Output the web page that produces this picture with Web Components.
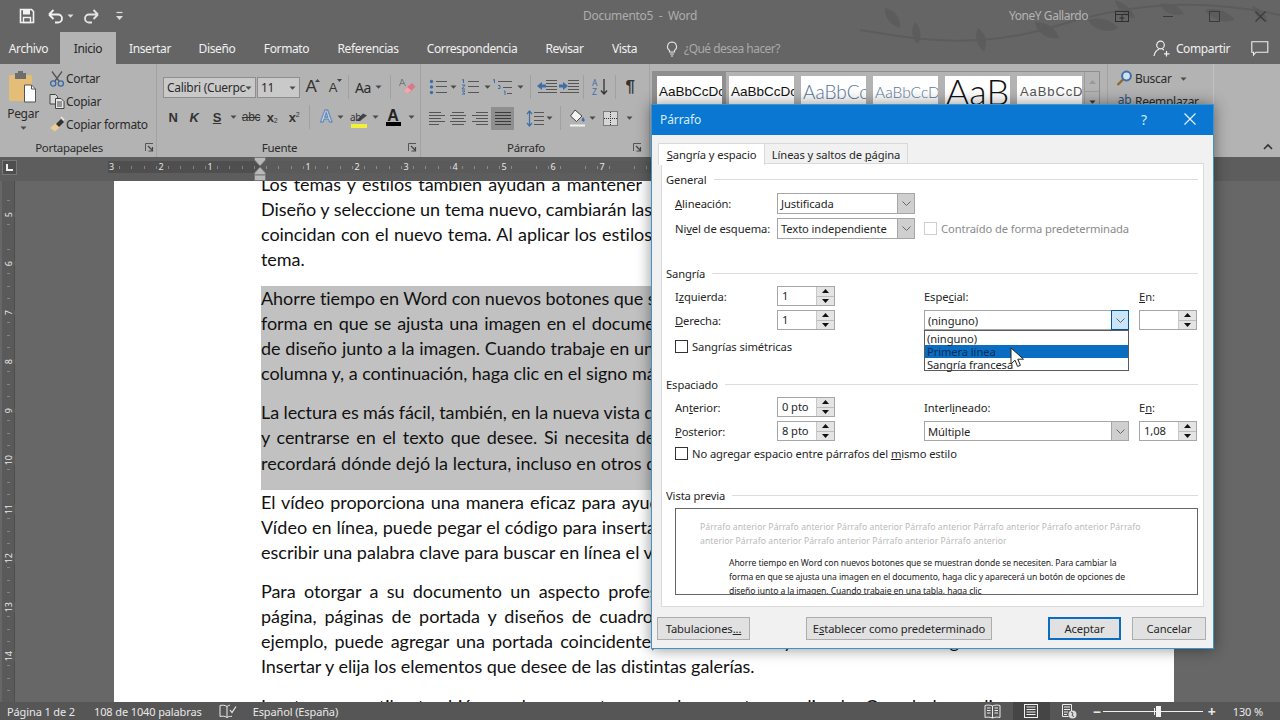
<!DOCTYPE html>
<html lang="es"><head><meta charset="utf-8"><title>Documento5 - Word</title>
<style>html,body{margin:0;padding:0;background:#666}body{font-family:"Noto Sans","Open Sans",sans-serif}</style></head>
<body><word-app></word-app>
<script>
const E=(name,css,html)=>customElements.define(name,class extends HTMLElement{connectedCallback(){if(this.shadowRoot)return;const s=this.attachShadow({mode:'open'});const a=k=>this.getAttribute(k)||'';s.innerHTML='<style>'+css+'</style>'+(typeof html=='function'?html(a):html)}});
const S=(w,h,b,x='')=>`<svg width="${w}" height="${h}" viewBox="0 0 ${w} ${h}" ${x} style="display:block;overflow:visible">${b}</svg>`;
const caret=c=>S(7,4,`<path d="M0.5 0.5h6L3.5 3.8z" fill="${c||'#4a4a4a'}"/>`);
const ln=(x1,y,x2,c='#555')=>`<path d="M${x1} ${y+.5}H${x2}" stroke="${c}"/>`;
const I={
save:S(16,16,'<path d="M1.5 1.5h11l2 2v11h-13z" fill="none" stroke="#f2f2f2" stroke-width="1.6"/><rect x="4" y="2" width="7" height="4.5" fill="#f2f2f2"/><rect x="4.5" y="9.5" width="7" height="5" fill="none" stroke="#f2f2f2" stroke-width="1.4"/>'),
undo:S(18,16,'<path d="M2 6.5H11a4 4 0 0 1 0 8H8M2 6.5L6.5 2M2 6.5L6.5 11" fill="none" stroke="#f2f2f2" stroke-width="1.8"/>'),
redo:S(18,16,'<path d="M16 6.5H7a4 4 0 0 0 0 8h3M16 6.5L11.5 2M16 6.5L11.5 11" fill="none" stroke="#e4e4e4" stroke-width="1.8"/>'),
more:S(9,10,'<path d="M1.5 1.5h6" stroke="#ddd" stroke-width="1.2"/><path d="M1 5h7L4.5 9z" fill="#ddd"/>'),
box:S(14,11,'<rect x=".5" y=".5" width="13" height="10" fill="none" stroke="#2e2e2e"/><path d="M.5 3.5h13M7 4v6M4.5 7h5" stroke="#2e2e2e"/>'),
min:S(10,10,'<path d="M0 5.5h10" stroke="#3a3a3a"/>'),
max:S(11,11,'<rect x=".5" y=".5" width="10" height="10" fill="none" stroke="#3a3a3a"/>'),
close:S(11,11,'<path d="M.5.5l10 10M10.5.5l-10 10" stroke="#3a3a3a" stroke-width="1.1"/>'),
bulb:S(12,16,'<path d="M6 1a4.6 4.6 0 0 0-2.5 8.4V11h5V9.4A4.6 4.6 0 0 0 6 1zM4 13h4M5 15h2" fill="none" stroke="#e6e6e6" stroke-width="1.1"/>'),
person:S(17,17,'<circle cx="7.5" cy="5" r="3.8" fill="none" stroke="#f0f0f0" stroke-width="1.2"/><path d="M1 16c.6-3.5 2.6-6 5.2-7M9 8.8c.8.3 1.3.7 1.8 1.2M13.5 11v5.5M11 13.8h5.5" fill="none" stroke="#f0f0f0" stroke-width="1.2"/>'),
comment:S(18,15,'<path d="M.8.8h16v10.4H5L2.5 14v-2.8H.8z" fill="none" stroke="#f0f0f0" stroke-width="1.1"/>'),
paste:S(30,32,'<rect x="1" y="4" width="23" height="26" rx="1.5" fill="#e4bd76"/><rect x="7" y="2" width="11" height="6" fill="#6d6d6d"/><rect x="10" y="0" width="5" height="3" fill="#6d6d6d"/><path d="M16.5 14h7l4 4v13h-11z" fill="#fff" stroke="#555"/><path d="M23.5 14v4h4" fill="none" stroke="#555"/>'),
cut:S(16,16,'<path d="M3 .5l7 9.5M13 .5L6 10" stroke="#555" stroke-width="1.3"/><circle cx="4.2" cy="12.5" r="2.6" fill="none" stroke="#3c69a0" stroke-width="1.3"/><circle cx="11.8" cy="12.5" r="2.6" fill="none" stroke="#3c69a0" stroke-width="1.3"/>'),
copy:S(16,15,'<path d="M1 .5h5.5l2 2V10H1z" fill="#d8d8d8" stroke="#444"/><path d="M6.5 4.5H12l3 3v7H6.5z" fill="#e8e8e8" stroke="#444"/><path d="M8 8h5M8 10h5M8 12h5" stroke="#444"/>'),
brush:S(16,15,'<path d="M1 11l6-5 4 4-5 4.5z" fill="#e8cd96"/><path d="M7 7l5-5 3 3-5 5z" fill="#333"/><path d="M12 0l3 3" stroke="#eee" stroke-width="1.4"/>'),
launch:S(9,9,'<path d="M.5 8V.5H8" fill="none" stroke="#555"/><path d="M3 3l4 4M7.5 4v4h-4" fill="none" stroke="#444" stroke-width="1.2"/>'),
eraser:S(17,18,'<path d="M3 1l3.5 7M3 1L.5 8M1.5 5.5h3.5" fill="none" stroke="#777"/><path d="M8 9l5-4 3.5 3.5-6 6.5H7L4.5 13z" fill="#d8788c"/><path d="M4.5 13L8 9l4.5 3.5L9.5 15H7z" fill="#eaa"/>'),
bullets:S(19,16,'<circle cx="2.5" cy="2.5" r="1.7" fill="#3d6ea8"/><circle cx="2.5" cy="8" r="1.7" fill="#3d6ea8"/><circle cx="2.5" cy="13.5" r="1.7" fill="#3d6ea8"/>'+ln(7,2,18)+ln(7,7,18)+ln(7,13,18)),
numbers:S(19,16,'<path d="M1 1l1.5-.5V4M1 6h3l-3 4h3M1 12h3l-1.5 1.5L4 15H1" fill="none" stroke="#3d6ea8"/>'+ln(7,2,18)+ln(7,7,18)+ln(7,13,18)),
multi:S(22,17,'<path d="M1 1l1.5-.5V4" fill="none" stroke="#3d6ea8"/><path d="M6 6.5h2v3H6M12 12h1v4" fill="none" stroke="#3d6ea8"/>'+ln(6,2,20)+ln(11,8,20)+ln(15,14,20)),
outdent:S(20,14,ln(9,0,20)+ln(9,3,20)+ln(9,6,20)+ln(9,9,20)+ln(1,12,20)+'<path d="M0 6l5-4v2.5h4v3H5V10z" fill="#3d6ea8"/>'),
indent:S(20,14,ln(9,0,20)+ln(9,3,20)+ln(9,6,20)+ln(9,9,20)+ln(1,12,20)+'<path d="M9 6L4 2v2.5H0v3h4V10z" fill="#3d6ea8"/>'),
sort:S(16,20,'<text x="0" y="9" font-family="Noto Sans" font-size="8.5" fill="#3d6ea8">A</text><text x="0" y="18" font-family="Noto Sans" font-size="8.5" fill="#3d6ea8">Z</text><path d="M12 2v15M9 13.5l3 3.5 3-3.5" fill="none" stroke="#333" stroke-width="1.3"/>'),
al:S(16,13,[0,3,6,9,12].map((y,i)=>ln(0,y,i%2?16:i==4?10:12)).join('')),
ac:S(16,13,[0,3,6,9,12].map((y,i)=>ln(i%2?0:2,y,i%2?16:14)).join('')),
ar:S(16,13,[0,3,6,9,12].map((y,i)=>ln(i%2?0:4,y,16)).join('')),
aj:S(16,13,[0,3,6,9,12].map(y=>ln(0,y,16,'#3c3c3c')).join('')),
spacing:S(18,17,'<path d="M3.5 1v15M1 4l2.5-3L6 4M1 13l2.5 3L6 13" fill="none" stroke="#3d6ea8" stroke-width="1.2"/>'+ln(8,2,18)+ln(8,6,18)+ln(8,10,18)+ln(8,14,18)),
shade:S(18,18,'<path d="M6 1l7 6-5.5 5.5L1.5 7z" fill="#f4f4f4" stroke="#444"/><path d="M14 8c1.5 2 2 3 1.5 4s-2.5.8-2.8-.2.4-2 1.3-3.8z" fill="#3d6ea8"/><path d="M1 16.5h15" stroke="#f0f0f0" stroke-width="2"/>'),
borders:S(15,15,'<rect x=".5" y=".5" width="14" height="14" fill="#d6d6d6" stroke="#333" stroke-dasharray="1 1"/><path d="M7.5 1v13M1 7.5h13" stroke="#333" stroke-dasharray="1 1"/>'),
search:S(17,17,'<circle cx="10.5" cy="6" r="4.4" fill="#cfe0f0" stroke="#3d6ea8" stroke-width="2"/><path d="M7 9.5L1.5 15" stroke="#8a6a30" stroke-width="2.4"/>'),
penhl:S(19,8,'<path d="M13 .5l4 2L10 8H6z" fill="#444"/>'),
up:S(10,6,'<path d="M1 5l4-4 4 4" fill="none" stroke="#333" stroke-width="1.6"/>'),
chev:S(9,5,'<path d="M.5.5l4 4 4-4" fill="none" stroke="#666"/>'),
tabstop:S(7,7,'<path d="M1 0v6h6" fill="none" stroke="#eee" stroke-width="2"/>'),
marker:S(12,24,'<path d="M.5.5h11v2.5L6 9 .5 3zM6 10l5.5 6v2H.5v-2z" fill="#b9b9b9" stroke="#777"/><rect x=".5" y="18" width="11" height="5.5" fill="#b9b9b9" stroke="#777"/>'),
book:S(18,15,'<path d="M8 2.5C6 1 3.5 1 1 1.5v11c2.5-.5 5-.5 7 1zM8 2.5c1-.8 2-1.2 3-1.4M8 13.5c1.5-1 3-1.2 5-1.2" fill="none" stroke="#ececec"/><path d="M11 6l2 2.5 4-6" fill="none" stroke="#ececec" stroke-width="1.2"/>'),
read:S(17,15,'<path d="M8.5 2C6.5 1 3 .8 1 1.5v12c2-.6 5.5-.5 7.5.5 2-1 5.5-1.1 7.5-.5v-12c-2-.7-5.500-.5-7.5.5zM8.5 2v12M3 4h3.5M3 6.5h3.5M3 9h3.5M10.5 4H14M10.5 6.5H14M10.5 9H14" fill="none" stroke="#ececec"/>'),
print:S(14,14,'<rect x=".5" y=".5" width="13" height="13" fill="none" stroke="#f0f0f0"/><path d="M2.5 3h9M2.5 5.5h9M2.5 8h9M2.5 10.5h9" stroke="#f0f0f0"/>'),
web:S(15,15,'<path d="M.5.5h9v7M.5.5v12h6M2 3h6M2 5.5h6M2 8h4M2 10.5h3" fill="none" stroke="#ececec"/><circle cx="10.5" cy="10.5" r="4" fill="#dcdcdc"/><path d="M9 8l2 1-1 2.5 2 1" fill="none" stroke="#555"/>'),
cursor:S(16,22,'<path d="M1 1v16l4-3.8 2.6 6.3 2.8-1.2-2.6-6.1H13.5z" fill="#fff" stroke="#222"/>')
};

E('word-app',`:host{display:flex;flex-direction:column;width:1280px;height:720px;position:relative;overflow:hidden;background:#676767;color:#222;font-family:"Noto Sans","Open Sans",sans-serif}`,
`<window-top></window-top><word-ribbon></word-ribbon><h-ruler></h-ruler><doc-view></doc-view><status-bar></status-bar><para-dialog></para-dialog>`);

E('window-top',`:host{display:block;position:relative;background:#656565;height:64px;flex:none}
svg.deco{position:absolute;left:860px;top:0}`,
`<svg class="deco" width="420" height="64" viewBox="0 0 420 64" fill="#5c5c5c"><path d="M25 8c10 2 16 10 15 20-8-2-16-10-15-20zM55 22c6 6 7 14 3 22-6-5-8-14-3-22zM118 28c8 5 10 14 6 23-7-5-10-14-6-23zM175 22c12 0 22 7 24 16-12 2-22-5-24-16zM228 20c12-4 24 0 30 8-10 6-24 2-30-8zM255 0c10 3 18 10 20 18-10 0-18-8-20-18zM300 4c10-2 20 2 24 10-10 3-20-1-24-10zM345 10c12-3 24 2 30 10-12 4-24-1-30-10zM392 6c8 2 14 8 16 16-8-1-14-7-16-16z"/><path d="M0 30c60 10 120 20 200-5s150-25 220-10" fill="none" stroke="#5c5c5c" stroke-width="2"/></svg><title-bar></title-bar><tab-bar></tab-bar>`);

E('title-bar',`:host{display:grid;grid-template-columns:1fr auto 1fr;height:32px;align-items:center;position:relative;font-size:12px;letter-spacing:-.3px}
.l,.r{display:flex;align-items:center}.r{justify-content:flex-end}
.c{display:flex;align-items:center;justify-content:center;flex:none;height:32px}
.t{color:#adadad;margin-top:-2px}.n{color:#b4b4b4;margin:-2px 11px 0 0;letter-spacing:-.45px}`,
`<div class="l"><span class="c" style="width:16px;margin-left:19px">${I.save}</span><span class="c" style="width:20px;margin-left:11px">${I.undo}</span><span class="c" style="width:8px">${caret('#ddd')}</span><span class="c" style="width:20px;margin-left:7px">${I.redo}</span><span class="c" style="width:12px;margin-left:12px">${I.more}</span></div>
<div class="t">Documento5&nbsp; -&nbsp; Word</div>
<div class="r"><span class="n">YoneY Gallardo</span><span class="c" style="width:46px">${I.box}</span><span class="c" style="width:46px">${I.min}</span><span class="c" style="width:46px">${I.max}</span><span class="c" style="width:43px;padding-left:3px;box-sizing:border-box">${I.close}</span></div>`);

E('tab-bar',`:host{display:flex;height:32px;position:relative;font-size:12px;color:#f1f1f1;align-items:stretch;letter-spacing:-.38px}
span{display:flex;align-items:center;justify-content:center;flex:none;padding-top:1px;box-sizing:border-box}
.on{background:#b3b3b3;color:#262626}.q{color:#a9a9a9;justify-content:flex-start;margin-left:6px;letter-spacing:-.55px}.sp{flex:1}`,
`<span style="width:57px">Archivo</span><span style="width:3px"></span><span class="on" style="width:56px">Inicio</span><span style="width:68px">Insertar</span><span style="width:66px">Diseño</span><span style="width:73px">Formato</span><span style="width:90px">Referencias</span><span style="width:118px">Correspondencia</span><span style="width:67px">Revisar</span><span style="width:53px">Vista</span><span style="width:15px"></span><span style="width:12px">${I.bulb}</span><span class="q" style="width:120px">¿Qué desea hacer?</span><span class="sp"></span><span style="width:17px">${I.person}</span><span style="width:67px;justify-content:flex-end;padding-right:7px">Compartir</span><span style="width:14px"></span><span style="width:18px">${I.comment}</span><span style="width:11px"></span>`);

E('ribbon-group',`:host{display:flex;flex-direction:column;height:100%;box-sizing:border-box;border-right:1px solid #a2a2a2;position:relative;flex:none}
.b{flex:1;min-height:0;position:relative}.f{height:20px;flex:none;display:flex;align-items:center;justify-content:center;font-size:11.5px;color:#2c2c2c;position:relative;padding-right:18px;box-sizing:border-box}
.f i{position:absolute;right:var(--lr,2px);top:6px}`,
a=>`<div class="b"><slot></slot></div><div class="f">${a('label')}${a('label')?`<i>${I.launch}</i>`:''}</div>`);

E('word-ribbon',`:host{display:flex;height:93px;flex:none;background:#b3b3b3;font-size:12px;color:#2b2b2b;letter-spacing:-.3px}
.row{display:flex;align-items:center;height:22px}
.c{display:flex;align-items:center;justify-content:center;flex:none;height:22px;position:relative}
.s{width:1px;height:24px;background:#a0a0a0;flex:none}
.paste{position:absolute;left:0;top:7px;width:46px;display:flex;flex-direction:column;align-items:center;color:#2b2b2b}
.paste b{font-weight:400;margin-top:3px;line-height:16px}.paste i{margin-top:4px}
.clip{position:absolute;left:47px;top:3px}.clip .row{height:23px;white-space:nowrap}
.clip .c{width:19px;margin-right:0}
.combo{height:21px;box-sizing:border-box;border:1px solid #8e8e8e;background:#c9c9c9;display:flex;align-items:center;padding-left:3px;font-size:12px;position:relative;overflow:hidden;white-space:nowrap;flex:none}
.combo i{position:absolute;right:3px;top:8px;background:#c9c9c9;padding-left:2px}
.fs{padding:12px 0 0 6px;box-sizing:border-box}
.fs .row+.row{margin-top:8px}
.fs2 .row+.row{margin-top:9px}
.tb{font-family:"Liberation Sans",sans-serif;font-weight:700;color:#333;font-size:13px}
.big{font-family:"Liberation Sans";font-size:17px;color:#333}.sm{font-family:"Liberation Sans";font-size:13px;color:#333}
.up{position:absolute;top:3px;right:2px;font-size:0}
.sup,.sub{font-size:7px;font-weight:400}
.glow{font-family:"Liberation Sans";font-weight:700;font-size:17px;color:#dbe7f4;-webkit-text-stroke:1px #5480b4}
.hl{display:flex;flex-direction:column;align-items:center;position:relative;width:18px}
.hl em{font:10px "Noto Sans";color:#333;position:absolute;left:0;top:-3px}
.ybar{position:absolute;left:1px;top:11px;width:16px;height:4px;background:#f2f03a}
.fc{font:700 16px "Liberation Sans";color:#222;border-bottom:4px solid #000;line-height:13px;width:15px;text-align:center;display:block}
.act{background:#8f8f8f}
.tile{width:65px;height:45px;background:#fff;overflow:hidden;white-space:nowrap;flex:none;box-sizing:border-box;display:flex;align-items:flex-start;justify-content:center;letter-spacing:0;font-family:"Liberation Sans",sans-serif}
.gal{position:absolute;left:2px;top:7px;width:448px;height:73px;border:1px solid #8e8e8e;box-sizing:border-box;display:flex;padding:4px 0 0 4px}
.gal .tile+.tile{margin-left:7px}
.gs{position:absolute;right:0;top:0;width:14px;display:flex;flex-direction:column;border-left:1px solid #9c9c9c}
.gs span{height:19px;display:flex;align-items:center;justify-content:center;border-bottom:1px solid #9c9c9c}
.first{outline:4px solid #8f8f8f}
.ed{padding:3px 0 0 6px}.ed .row{height:23px;white-space:nowrap}
.rest{flex:1;display:flex;align-items:flex-end;justify-content:flex-end;padding:0 7px 7px 0}`,
`<ribbon-group label="Portapapeles" style="width:157px">
<div class="paste">${I.paste}<b>Pegar</b><i>${caret()}</i></div>
<div class="clip"><div class="row"><span class="c">${I.cut}</span>Cortar</div><div class="row"><span class="c">${I.copy}</span>Copiar</div><div class="row"><span class="c">${I.brush}</span>Copiar formato</div></div>
</ribbon-group>
<ribbon-group label="Fuente" style="width:264px;--lr:3px"><div class="fs">
<div class="row"><div class="combo" style="width:93px">Calibri (Cuerpo<i>${caret()}</i></div><div class="combo" style="width:43px;margin-left:1px">11<i>${caret()}</i></div>
<span class="c" style="width:22px;margin-left:0"><span class="big">A</span><span class="up">${S(5,3,'<path d="M0 3l2.5-3L5 3z" fill="#444"/>')}</span></span>
<span class="c" style="width:22px"><span class="sm">A</span><span class="up">${S(5,3,'<path d="M0 0l2.5 3L5 0z" fill="#444"/>')}</span></span>
<span class="c" style="width:8px"><span class="s"></span></span><span class="c" style="width:22px;font-size:14px">Aa</span><span class="c" style="width:8px">${caret()}</span><span class="c" style="width:16px"><span class="s"></span></span><span class="c" style="width:18px">${I.eraser}</span></div>
<div class="row"><span class="c tb" style="width:20px">N</span><span class="c tb" style="width:22px;font-style:italic">K</span><span class="c tb" style="width:24px;text-decoration:underline">S</span><span class="c" style="width:8px">${caret()}</span><span class="c tb" style="width:28px;font-size:12px;text-decoration:line-through;font-weight:400">abc</span><span class="c tb" style="width:14px">x<span class="sub" style="margin-top:6px">2</span></span><span class="c tb" style="width:30px">x<span class="sup" style="margin-top:-6px">2</span></span><span class="s" style="width:1px;margin-right:5px"></span><span class="c glow" style="width:22px">A</span><span class="c" style="width:7px">${caret()}</span><span class="c" style="width:26px;margin-left:2px"><span class="hl"><em>ab</em>${I.penhl}<span class="ybar"></span></span></span><span class="c" style="width:6px">${caret()}</span><span class="c" style="width:30px"><span class="fc">A</span></span><span class="c" style="width:6px">${caret()}</span></div>
</div></ribbon-group>
<ribbon-group label="Párrafo" style="width:229px;--lr:7px"><div class="fs fs2">
<div class="row"><span class="c" style="width:22px">${I.bullets}</span><span class="c" style="width:8px">${caret()}</span><span class="c" style="width:26px">${I.numbers}</span><span class="c" style="width:8px">${caret()}</span><span class="c" style="width:24px">${I.multi}</span><span class="c" style="width:10px">${caret()}</span><span class="c" style="width:10px"><span class="s"></span></span><span class="c" style="width:24px">${I.outdent}</span><span class="c" style="width:20px">${I.indent}</span><span class="c" style="width:9px"><span class="s"></span></span><span class="c" style="width:24px">${I.sort}</span><span class="c" style="width:6px"><span class="s"></span></span><span class="c" style="width:24px;font:700 17px 'Liberation Sans';color:#333">¶</span></div>
<div class="row"><span class="c" style="width:20px">${I.al}</span><span class="c" style="width:22px">${I.ac}</span><span class="c" style="width:22px">${I.ar}</span><span class="c act" style="width:23px;height:23px">${I.aj}</span><span class="c" style="width:10px"></span><span class="c" style="width:22px">${I.spacing}</span><span class="c" style="width:6px">${caret()}</span><span class="c" style="width:16px"><span class="s"></span></span><span class="c" style="width:20px">${I.shade}</span><span class="c" style="width:8px">${caret()}</span><span class="c" style="width:2px"></span><span class="c" style="width:24px">${I.borders}</span><span class="c" style="width:14px">${caret()}</span></div>
</div></ribbon-group>
<ribbon-group style="width:458px"><div class="gal">
<div class="tile first" style="font-size:13.5px;color:#111;padding-top:8px;justify-content:flex-start;padding-left:2px">AaBbCcDc</div><div class="tile" style="font-size:13.5px;color:#111;padding-top:8px;justify-content:flex-start;padding-left:2px">AaBbCcDc</div><div class="tile" style="font-size:19px;color:#5a7596;padding-top:4px;justify-content:flex-start;padding-left:2px;font-family:Lato;font-weight:300">AaBbCc</div><div class="tile" style="font-size:15.5px;color:#5d7a9c;padding-top:7px;justify-content:flex-start;padding-left:2px;font-family:Lato;font-weight:300">AaBbCcD</div><div class="tile" style="font-size:36px;color:#111;font-family:Lato;font-weight:300;padding-top:0;line-height:30px">AaB</div><div class="tile" style="font-size:13px;color:#555;letter-spacing:.9px;padding-top:8px;justify-content:flex-start;padding-left:3px">AaBbCcD</div>
<div class="gs"><span>${S(7,4,'<path d="M0 4l3.5-4L7 4z" fill="#999"/>')}</span><span>${caret('#333')}</span></div>
</div></ribbon-group>
<ribbon-group style="width:106px;border-right-color:#c2c2c2"><div class="ed"><div class="row"><span class="c" style="width:21px">${I.search}</span>Buscar<span class="c" style="width:24px">${caret()}</span></div><div class="row"><span class="c" style="width:21px;font-size:12px;color:#2f4f7a;margin-top:-4px">ab</span>Reemplazar</div></div></ribbon-group>
<div class="rest">${I.up}</div>`);

const hnum=['2','1','','1','2','3','4','5','6','7'];
E('h-ruler',`:host{display:block;height:24px;flex:none;background:#5d5d5d;position:relative;border-top:0;box-sizing:border-box;padding-top:4px}
.in{display:flex;align-items:flex-start}
.tab{width:15px;height:15px;box-sizing:border-box;border:1px solid #777;background:#4e4e4e;margin:-1px 0 0 2px;display:flex;align-items:center;justify-content:center;flex:none}
.bar{margin-left:91px;height:12px;display:flex;width:920px;background:repeating-linear-gradient(90deg,transparent 0 11.25px,#848484 11.25px 12.25px) 0 50%/100% 3px no-repeat,#4f4f4f;color:#e6e6e6;font-size:9px;line-height:12px}
.bar span{width:49px;flex:none;text-align:center}.bar span:first-child{width:28.5px;text-align:left;padding-left:1px;box-sizing:border-box}
.live{position:absolute;left:260px;top:4px;height:12px;width:390px;background:#fff1}
.mk{position:absolute;left:254px;top:0}`,
`<div class="in"><div class="tab">${I.tabstop}</div><div class="bar"><span>3</span>${hnum.map(n=>`<span>${n}</span>`).join('')}</div></div><div class="live"></div><div class="mk">${I.marker}</div>`);

const vn=[5,6,7,8,9,10,11,12,13,14];
const D=[
[["Los temas y estilos también ayudan a mantener",381],["Diseño y seleccione un tema nuevo, cambiarán las",391],["coincidan con el nuevo tema. Al aplicar los estilos",391],["tema.",0]],
"S",
[["Ahorre tiempo en Word con nuevos botones que se",0],["forma en que se ajusta una imagen en el documento",420],["de diseño junto a la imagen. Cuando trabaje en una",402],["columna y, a continuación, haga clic en el signo más",0,-.04]],
[["La lectura es más fácil, también, en la nueva vista de",0,-.1],["y centrarse en el texto que desee. Si necesita dejar",414],["recordará dónde dejó la lectura, incluso en otros dispositivos",0,.05]],
"E",
[["El vídeo proporciona una manera eficaz para ayudar",414],["Vídeo en línea, puede pegar el código para insertar",0,.08],["escribir una palabra clave para buscar en línea el vídeo",0,.02]],
[["Para otorgar a su documento un aspecto profesional,",438],["página, páginas de portada y diseños de cuadro",392],["ejemplo, puede agregar una portada coincidente, el encabezado y la barra lateral. Haga clic en",766],["Insertar y elija los elementos que desee de las distintas galerías.",0]],
[["Los temas y estilos también ayudan a mantener su documento coordinado. Cuando haga clic en",766]]
];
function para(p){return '<div class="p">'+p.map(([t,w,ls])=>`<div class="l${w?' j':''}" style="${w?`width:${w}px;`:''}${ls?`letter-spacing:${ls}px`:''}">${t}</div>`).join('')+'</div>'}
function docHtml(){let h='';for(const p of D){if(p==='S'){h+='<div class="sel">';}else if(p==='E'){h+='</div>';}else h+=para(p)}return h}
E('doc-view',`:host{display:flex;flex:1;min-height:0;overflow:hidden;background:#676767;font-family:Lato,"Liberation Sans",sans-serif;color:#111}
.vr{width:12px;margin-left:2px;background:#5a5a5a;border-right:1px solid #4d4d4d;flex:none;padding-top:9.5px;box-sizing:content-box;color:#e6e6e6;font:9px "Noto Sans",sans-serif;
background-image:repeating-linear-gradient(0deg,transparent 0 11.25px,#848484 11.25px 12.25px);background-size:3px 100%;background-position:50% 0;background-repeat:no-repeat}
.vr div{height:49px;display:flex;align-items:center;justify-content:center}.vr span{writing-mode:vertical-rl;transform:rotate(180deg);background:#5a5a5a}
.page{margin-left:99px;width:1060px;background:#fff;flex:none;overflow:hidden;padding-left:147px;box-sizing:border-box}
.col{width:766px;margin-top:-9.5px}
.p{padding-bottom:14.15px}.l{height:25.08px;line-height:25.08px;font-size:18px;letter-spacing:-.05px;white-space:nowrap;overflow:visible}
.l.j{white-space:normal;text-align:justify;text-align-last:justify;overflow:hidden}
.sel{background:#c1c1c1;margin-top:0}`,
`<div class="vr">${vn.map(n=>`<div><span>${n}</span></div>`).join('')}</div><div class="page"><div class="col">${docHtml()}</div></div>`);

E('status-bar',`:host{display:flex;height:18px;flex:none;background:#565656;color:#e8e8e8;font-size:11px;align-items:center;position:relative;z-index:1;letter-spacing:-.12px}
span{flex:none;display:flex;align-items:center;justify-content:center;height:18px;white-space:nowrap}
.sp{flex:1}.on{background:#454545}
.z{width:100px;height:1px;background:#f0f0f0;position:relative;display:block;flex:none}
.z i{position:absolute;left:53px;top:-5px;width:5px;height:11px;background:#f4f4f4}.z b{position:absolute;left:51px;top:-3px;width:1px;height:7px;background:#f0f0f0}`,
`<span style="margin-left:7px">Página 1 de 2</span><span style="margin-left:19px">108 de 1040 palabras</span><span style="margin-left:17px;width:18px">${I.book}</span><span style="margin-left:16px">Español (España)</span><i class="sp"></i>
<span style="width:18px">${I.read}</span><span class="on" style="width:37px;margin-left:11px">${I.print}</span><span style="width:18px;margin-left:11px">${I.web}</span><span style="width:10px;margin-left:13px;font-weight:700;font-size:14px">−</span><span style="width:1px"></span><span class="z"><b></b><i></i></span><span style="width:14px;margin-left:2px;font-weight:700;font-size:14px">+</span><span style="margin-left:14px;margin-right:17px">130 %</span>`);

E('dlg-section',`:host{display:block;box-sizing:border-box;position:relative}
.h{display:flex;align-items:center;height:18px;gap:7px}.h i{flex:1;height:1px;background:#dcdcdc}
.b{padding-left:9px}`,a=>`<div class="h"><span>${a('label')}</span><i></i></div><div class="b"><slot></slot></div>`);

E('dlg-select',`:host{display:block;height:21px;box-sizing:border-box;position:relative;border:1px solid #a6a6a6;background:#fff}
.v{position:absolute;left:3px;top:0;line-height:19px;white-space:nowrap}
.a{position:absolute;right:-1px;top:-1px;bottom:-1px;width:18px;background:#cfcfcf;border:1px solid #a6a6a6;box-sizing:border-box;display:flex;align-items:center;justify-content:center}
:host([focused]) .a{background:#cce4f7;border-color:#005499}
.m{position:absolute;left:-1px;right:-1px;top:19px;box-sizing:border-box;border:1px solid #5b5b5b;background:#fff;height:41px;z-index:3;padding-top:1px}
.m div{height:13px;line-height:13px;padding-left:2px;white-space:nowrap}.m .h{background:#0b6dc1;color:#092f5c}`,
a=>`<span class="v"><slot></slot></span><span class="a">${I.chev}</span>`+(a('items')?`<div class="m">${a('items').split('|').map((t,i)=>`<div class="${i==+a('hi')?'h':''}">${t}</div>`).join('')}</div>`:''));

E('dlg-spin',`:host{display:block;width:58px;height:20px;box-sizing:border-box;border:1px solid #a6a6a6;background:#fff;position:relative}
.v{position:absolute;left:4px;top:0;line-height:18px}
.a{position:absolute;right:0;top:0;bottom:0;width:17px;display:flex;flex-direction:column;background:#e4e4e4;border-left:1px solid #c8c8c8}
.a i{flex:1;display:flex;align-items:center;justify-content:center}.a i+i{border-top:1px solid #bcbcbc}`,
`<span class="v"><slot></slot></span><span class="a"><i>${S(7,4,'<path d="M0 4l3.5-4L7 4z" fill="#111"/>')}</i><i>${S(7,4,'<path d="M0 0l3.5 4L7 0z" fill="#111"/>')}</i></span>`);

E('dlg-check',`:host{display:flex;align-items:center;gap:4px;height:20px;white-space:nowrap}
i{width:13px;height:13px;box-sizing:border-box;border:1px solid #333;background:#fff;flex:none}
:host([disabled]){color:#8a8a8a}:host([disabled]) i{border-color:#cfcfcf}`,`<i></i><span><slot></slot></span>`);

E('dlg-btn',`:host{display:flex;align-items:center;justify-content:center;height:23px;box-sizing:border-box;background:#e1e1e1;border:1px solid #adadad;flex:none;white-space:nowrap}
:host([primary]){border:2px solid #0b6dc1}`,`<slot></slot>`);

E('para-dialog',`:host{position:absolute;left:651px;top:104px;width:563px;height:545px;box-sizing:border-box;border:1px solid #3e93c8;background:#f1f1f1;box-shadow:0 0 14px rgba(0,0,0,.45);display:flex;flex-direction:column;z-index:5;font-size:11.2px;color:#262626;letter-spacing:-.1px}
u{text-decoration:underline}
.tb{height:30px;background:#0a78d2;color:#d7ecfa;display:flex;align-items:center;padding:0 0 2px 8px;box-sizing:border-box;font-size:12px;flex:none}
.tb b{font-weight:400;flex:1}.tb i{font-style:normal;display:flex;justify-content:center;align-items:center;flex:none}
.tabs{display:flex;padding:8px 0 0 6px;height:29px;box-sizing:border-box;flex:none}
.tabs>span{display:flex;align-items:center;justify-content:center;box-sizing:border-box;border:1px solid #d9d9d9;border-bottom:0;background:#f1f1f1;height:21px;flex:none}
.tabs .on{background:#fff;height:22px;position:relative;z-index:1}
.panel{margin:-1px 9px 0 9px;height:444px;box-sizing:border-box;background:#fff;border:1px solid #dadada;padding:6px 5px 0 4px;flex:none;position:relative}
.grid{display:grid;grid-template-columns:102px 147px 215px 58px;grid-auto-rows:20px;align-items:center}
.foot{display:flex;align-items:center;padding:10px 0 0 5px}
.prev{width:523px;height:87px;box-sizing:border-box;border:1px solid #666;background:#fff;overflow:hidden;margin-top:4px;font-size:8.6px;line-height:14px;white-space:nowrap;padding:11px 0 0 24px}
.pg{color:#b9b9b9;letter-spacing:.08px}.pb{color:#222;margin:8px 0 0 29px;letter-spacing:-.09px}
.cur{position:absolute;left:358px;top:242px;z-index:9}`,
`<div class="tb"><b>Párrafo</b><i style="width:14px;margin-right:31px;font-size:14px;color:#cfe8fa">?</i><i style="width:16px;margin-right:15px">${S(12,12,'<path d="M.5.5l11 11M11.5.5l-11 11" stroke="#e6f4fd" stroke-width="1.2"/>')}</i></div>
<div class="tabs"><span class="on" style="width:107px"><b style="font-weight:400"><u>S</u>angría y espacio</b></span><span style="width:143px;border-left:0"><b style="font-weight:400">Líneas y saltos de <u>p</u>ágina</b></span></div>
<div class="panel">
<dlg-section label="General" style="height:94px"><div class="grid" style="grid-auto-rows:21px;row-gap:4px;margin-top:5px">
<span><u>A</u>lineación:</span><dlg-select style="width:138px">Justificada</dlg-select><span></span><span></span>
<span>Ni<u>v</u>el de esquema:</span><dlg-select style="width:138px">Texto independiente</dlg-select><dlg-check disabled style="grid-column:3/5">Contraído de forma predeterminada</dlg-check>
</div></dlg-section>
<dlg-section label="Sangría" style="height:111px"><div class="grid" style="row-gap:4px;margin-top:4px">
<span>I<u>z</u>quierda:</span><dlg-spin>1</dlg-spin><span>Espe<u>c</u>ial:</span><span><u>E</u>n:</span>
<span><u>D</u>erecha:</span><dlg-spin>1</dlg-spin><dlg-select focused items="(ninguno)|Primera línea|Sangría francesa" hi="1" style="width:205px;height:20px">(ninguno)</dlg-select><dlg-spin></dlg-spin>
<dlg-check style="grid-column:1/3;margin-top:5px">San<u>g</u>rías simétricas</dlg-check>
</div></dlg-section>
<dlg-section label="Espaciado" style="height:111px"><div class="grid" style="row-gap:4px;margin-top:4px">
<span>An<u>t</u>erior:</span><dlg-spin>0 pto</dlg-spin><span>Interl<u>i</u>neado:</span><span>E<u>n</u>:</span>
<span><u>P</u>osterior:</span><dlg-spin>8 pto</dlg-spin><dlg-select style="width:205px;height:20px">Múltiple</dlg-select><dlg-spin>1,08</dlg-spin>
<dlg-check style="grid-column:1/5;margin-top:-4px">No agregar espacio entre párrafos del <u>m</u>ismo estilo</dlg-check>
</div></dlg-section>
<dlg-section label="Vista previa"><div class="prev"><div class="pg">Párrafo anterior Párrafo anterior Párrafo anterior Párrafo anterior Párrafo anterior Párrafo anterior Párrafo<br>anterior Párrafo anterior Párrafo anterior Párrafo anterior Párrafo anterior</div><div class="pb">Ahorre tiempo en Word con nuevos botones que se muestran donde se necesiten. Para cambiar la<br>forma en que se ajusta una imagen en el documento, haga clic y aparecerá un botón de opciones de<br>diseño junto a la imagen. Cuando trabaje en una tabla, haga clic</div></div></dlg-section>
</div>
<div class="foot"><dlg-btn style="width:93px">Tabulaciones<u>...</u></dlg-btn><dlg-btn style="width:186px;margin-left:56px">E<u>s</u>tablecer como predeterminado</dlg-btn><dlg-btn primary style="width:73px;margin-left:56px">Aceptar</dlg-btn><dlg-btn style="width:74px;margin-left:11px">Cancelar</dlg-btn></div>
<div class="cur">${I.cursor}</div>`);
</script></body></html>
